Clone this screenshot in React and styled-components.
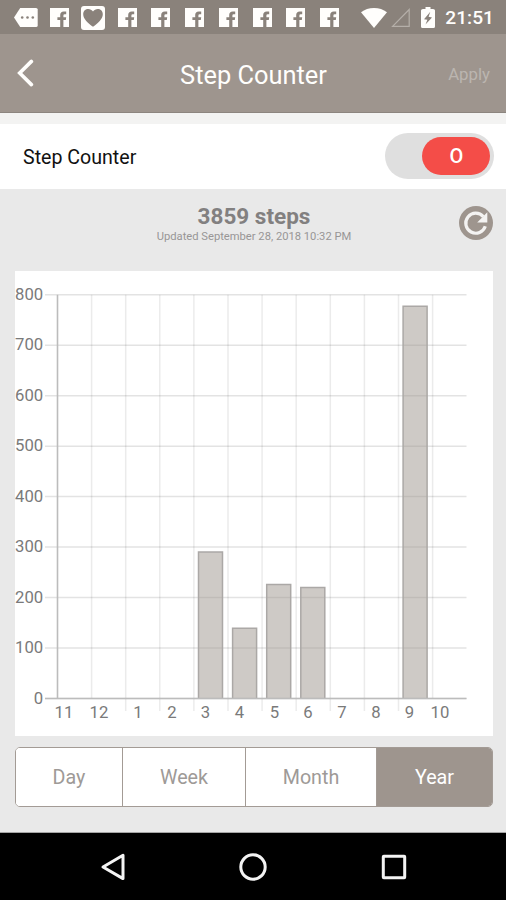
import React, { useState } from 'react';
import styled, { createGlobalStyle } from 'styled-components';

const months = [
    { label: '11', steps: 0, labelX: 49 },
    { label: '12', steps: 0, labelX: 84 },
    { label: '1', steps: 0, labelX: 123 },
    { label: '2', steps: 0, labelX: 157 },
    { label: '3', steps: 290, labelX: 190.5 },
    { label: '4', steps: 139, labelX: 224.5 },
    { label: '5', steps: 226, labelX: 259.5 },
    { label: '6', steps: 220, labelX: 293 },
    { label: '7', steps: 0, labelX: 327 },
    { label: '8', steps: 0, labelX: 361 },
    { label: '9', steps: 777, labelX: 394.5 },
    { label: '10', steps: 0, labelX: 425 },
];
const levels = [800, 700, 600, 500, 400, 300, 200, 100, 0];
const periods = ['Day', 'Week', 'Month', 'Year'];

const AXIS_LEFT = 42.5;
const AXIS_TOP = 23.7;
const AXIS_BOTTOM = 427.5;
const COLUMN = 34.1;

const getY = steps => AXIS_BOTTOM - (steps / 800) * (AXIS_BOTTOM - AXIS_TOP);

function FacebookIcon() {
    return (
        <svg width='19' height='19' viewBox='0 0 19 19'>
            <path fill='#fffefc' d='M0 0h19v19h-5.600v-7h2.400l.4-2.800h-2.800V7.400q0-1.200 1.300-1.200h1.500V3.400h-2.400Q10.200 3.400 10.200 7v2.200H7.400V12h2.800v7H0z' />
        </svg>
    );
}

function MessageIcon() {
    return (
        <svg width='24' height='19' viewBox='0 0 24 19'>
            <path fill='#fffefc' d='M6.200 0H22q1.700 0 1.700 1.500v16q0 1.500-1.700 1.500H6.200L0 9.500z' />
            <g fill='#8a827b'>
                <circle cx='8.200' cy='9.500' r='1.300' />
                <circle cx='13.500' cy='9.500' r='1.300' />
                <circle cx='18.800' cy='9.500' r='1.300' />
            </g>
        </svg>
    );
}

function HeartIcon() {
    return (
        <svg width='24' height='24' viewBox='0 0 24 24'>
            <rect width='24' height='24' rx='3' fill='#fffefc' />
            <path fill='#8a827b' d='M12 20.800C7 17 2.200 13 2.200 8.200c0-6 7.300-6.800 9.800-2.600 2.500-4.200 9.800-3.400 9.800 2.600 0 4.800-4.800 8.800-9.800 12.600z' />
        </svg>
    );
}

function StatusIcons() {
    return (
        <DeviceIcons>
            <svg width='26' height='20' viewBox='0 0 26 20'>
                <path fill='#fffefc' d='M13 20 0 4.300Q5.500 0 13 0t13 4.300z' />
            </svg>
            <svg width='19' height='19' viewBox='0 0 19 19'>
                <path fill='none' stroke='#b5afa9' strokeWidth='1.200' d='M18.200 1.500v16.800H1.600z' />
            </svg>
            <svg className='battery' width='14' height='21' viewBox='0 0 14 21'>
                <path fill='#fffefc' d='M4.500 0h5v2H12q2 0 2 1.500v16q0 1.500-1.500 1.500h-11Q0 21 0 19.500v-16Q0 2 2 2h2.500z' />
                <path fill='#8a827b' d='M9.300 4.800 3 12.200l3.400.6-1.900 4.800 6.500-7-3.400-.9z' />
            </svg>
        </DeviceIcons>
    );
}

function RefreshIcon() {
    return (
        <svg width='34' height='34' viewBox='0 0 34 34'>
            <circle cx='17' cy='17' r='17' fill='#9e958e' />
            <path fill='none' stroke='#f4f3f2' strokeWidth='3.200' d='M24.300 10.600A10 10 0 1 0 26.300 20.300' />
            <path fill='#f4f3f2' d='M28.300 6.300v10.200H18.200z' />
        </svg>
    );
}

function StepsChart() {
    return (
        <ChartSvg width='478' height='465' viewBox='0 0 478 465'>
            {levels.map(level => (
                <g key={ level }>
                    <line className='grid' x1='30' x2='451.500' y1={ getY(level) } y2={ getY(level) } />
                    <text x='28.200' y={ getY(level) + 5.300 } textAnchor='end'>{level}</text>
                </g>
            ))}
            {months.map((month, idx) => {
                const x = AXIS_LEFT + idx * COLUMN;
                return (
                    <g key={ month.label }>
                        {idx > 0 && <line className='grid column' x1={ x } x2={ x } y1={ AXIS_TOP } y2={ idx > 1 && idx < 11 ? 440 : AXIS_BOTTOM } />}
                        <text x={ month.labelX } y='446.500' textAnchor='middle'>{month.label}</text>
                        {month.steps > 0 && (
                            <path
                                className='bar'
                                d={ `M${x + 4.600} ${AXIS_BOTTOM}V${getY(month.steps)}h24V${AXIS_BOTTOM}` }
                            />
                        )}
                    </g>
                );
            })}
            <line className='axis' x1={ AXIS_LEFT } x2={ AXIS_LEFT } y1={ AXIS_TOP } y2={ AXIS_BOTTOM } />
            <line className='axis' x1='30' x2='451.500' y1={ AXIS_BOTTOM } y2={ AXIS_BOTTOM } />
        </ChartSvg>
    );
}

function App() {
    const [ period, setPeriod ] = useState('Year');
    return (
        <Screen>
            <GlobalStyle />
            <StatusBar>
                <Notifications>
                    <span><MessageIcon /></span>
                    <span><FacebookIcon /></span>
                    <span><HeartIcon /></span>
                    {[1, 2, 3, 4, 5, 6, 7].map(n => <span key={ n }><FacebookIcon /></span>)}
                </Notifications>
                <StatusIcons />
                <Clock>21:51</Clock>
            </StatusBar>
            <Header>
                <BackButton aria-label='Back'>
                    <svg width='18' height='28' viewBox='0 0 18 28'>
                        <path fill='none' stroke='#fffefc' strokeWidth='3.600' strokeLinecap='round' d='M14.400 2.400 2.700 14l11.700 11.600' />
                    </svg>
                </BackButton>
                <Title>Step Counter</Title>
                <ApplyButton>Apply</ApplyButton>
            </Header>
            <SettingRow>
                <SettingLabel>Step Counter</SettingLabel>
                <Toggle>
                    <Thumb>O</Thumb>
                </Toggle>
            </SettingRow>
            <Content>
                <Summary>
                    <Totals>
                        <StepTotal>3859 steps</StepTotal>
                        <Updated>Updated September 28, 2018 10:32 PM</Updated>
                    </Totals>
                    <RefreshButton aria-label='Refresh'><RefreshIcon /></RefreshButton>
                </Summary>
                <ChartCard><StepsChart /></ChartCard>
                <Tabs>
                    {periods.map(name => (
                        <Tab key={ name } $active={ name === period } onClick={ () => setPeriod(name) }>{name}</Tab>
                    ))}
                </Tabs>
            </Content>
            <NavBar>
                <svg width='26' height='30' viewBox='0 0 26 30'>
                    <path fill='none' stroke='#f4f4f4' strokeWidth='3' strokeLinejoin='round' d='M23 3.200v23.400L3 15z' />
                </svg>
                <svg width='28' height='28' viewBox='0 0 28 28'>
                    <circle cx='14' cy='14' r='12.200' fill='none' stroke='#f4f4f4' strokeWidth='3' />
                </svg>
                <svg width='26' height='26' viewBox='0 0 26 26'>
                    <rect x='2.300' y='2.300' width='21.400' height='21.400' rx='.5' fill='none' stroke='#f4f4f4' strokeWidth='3' />
                </svg>
            </NavBar>
        </Screen>
    );
}

const GlobalStyle = createGlobalStyle`
    * {
        box-sizing: border-box;
    }
    body {
        margin: 0;
        font-family: Roboto, 'Liberation Sans', sans-serif;
    }
    button {
        padding: 0;
        border: 0;
        background: none;
        font-family: inherit;
    }
    svg {
        display: block;
    }
`;

const Screen = styled.div`
    display: flex;
    flex-direction: column;
    width: 506px;
    height: 900px;
    overflow: hidden;
    background-color: #e9e9e9;
`;

const StatusBar = styled.div`
    display: flex;
    align-items: center;
    height: 34px;
    padding: 1px 12px 0 9px;
    background-color: #8a827b;
`;

const Notifications = styled.div`
    display: grid;
    grid-template-columns: repeat(10, 33.75px);
    flex: 1;
    align-items: center;
    justify-items: center;
`;

const DeviceIcons = styled.div`
    display: flex;
    align-items: center;
    gap: 4px;
    margin-right: 2px;
    .battery {
        margin-left: 7px;
    }
`;

const Clock = styled.span`
    margin-left: 8px;
    color: #fffefc;
    font-size: 19.2px;
    font-weight: 500;
    line-height: 36px;
`;

const Header = styled.header`
    display: grid;
    grid-template-columns: 100px 1fr 100px;
    align-items: center;
    height: 79px;
    padding: 0 16px 0 17px;
    border-bottom: 1px solid #8c857f;
    background-color: #9e958e;
`;

const BackButton = styled.button`
    justify-self: start;
`;

const Title = styled.h1`
    margin: 3px 0 0;
    color: #fffefc;
    font-size: 25.4px;
    font-weight: 400;
    text-align: center;
`;

const ApplyButton = styled.button`
    justify-self: end;
    margin-top: 2px;
    color: #bbb5b0;
    font-size: 16.8px;
`;

const SettingRow = styled.div`
    display: flex;
    align-items: center;
    justify-content: space-between;
    height: 76px;
    padding: 0 12px 0 23px;
    border-top: 11px solid #f3f3f2;
    background-color: #fff;
`;

const SettingLabel = styled.span`
    margin-top: 2px;
    color: #111;
    font-size: 19.6px;
`;

const Toggle = styled.div`
    display: flex;
    justify-content: flex-end;
    width: 109px;
    height: 46px;
    margin-top: -1px;
    padding: 4px;
    border-radius: 23px;
    background-color: #dfdfdf;
`;

const Thumb = styled.div`
    width: 68px;
    padding-left: 1px;
    border-radius: 19px;
    background-color: #f44d48;
    color: #fff;
    font-size: 20px;
    font-weight: 500;
    line-height: 39px;
    text-align: center;
`;

const Content = styled.main`
    display: flex;
    flex: 1;
    flex-direction: column;
    padding: 0 13px 0 15px;
    border-bottom: 1px solid #a5a5a5;
`;

const Summary = styled.div`
    display: grid;
    grid-template-columns: 34px 1fr 34px;
    height: 82px;
    padding-top: 13px;
`;

const Totals = styled.div`
    grid-column: 2;
    text-align: center;
`;

const StepTotal = styled.div`
    color: #828080;
    font-size: 22.5px;
    font-weight: 700;
    line-height: 28px;
`;

const Updated = styled.div`
    color: #989696;
    font-size: 11.2px;
    line-height: 13px;
`;

const RefreshButton = styled.button`
    height: 34px;
    margin-top: 4px;
`;

const ChartCard = styled.section`
    height: 465px;
    background-color: #fff;
`;

const ChartSvg = styled.svg`
    text {
        fill: #7a7a7a;
        font-size: 16.7px;
    }
    .grid {
        stroke: rgba(0, 0, 0, 0.11);
        stroke-width: 1.5;
    }
    .column {
        stroke: rgba(0, 0, 0, 0.08);
    }
    .bar {
        fill: rgba(158, 149, 142, 0.5);
        stroke: #aba8a6;
        stroke-width: 1.5;
    }
    .axis {
        stroke: #bcbcbc;
        stroke-width: 1.6;
    }
`;

const Tabs = styled.div`
    display: grid;
    grid-template-columns: 106px 123px 131px 1fr;
    height: 60px;
    margin-top: 11px;
    overflow: hidden;
    border: 1px solid #a39b95;
    border-radius: 5px;
    background-color: #fff;
`;

const Tab = styled.button`
    background-color: ${props => props.$active ? '#9e958e' : '#fff'};
    color: ${props => props.$active ? '#fff' : '#9e9a97'};
    font-size: 19.7px;
    & + & {
        border-left: 1px solid #a39b95;
    }
`;

const NavBar = styled.nav`
    display: grid;
    grid-template-columns: repeat(3, 140.5px);
    align-items: center;
    justify-content: center;
    justify-items: center;
    height: 67px;
    background-color: #000;
`;

export default App;
